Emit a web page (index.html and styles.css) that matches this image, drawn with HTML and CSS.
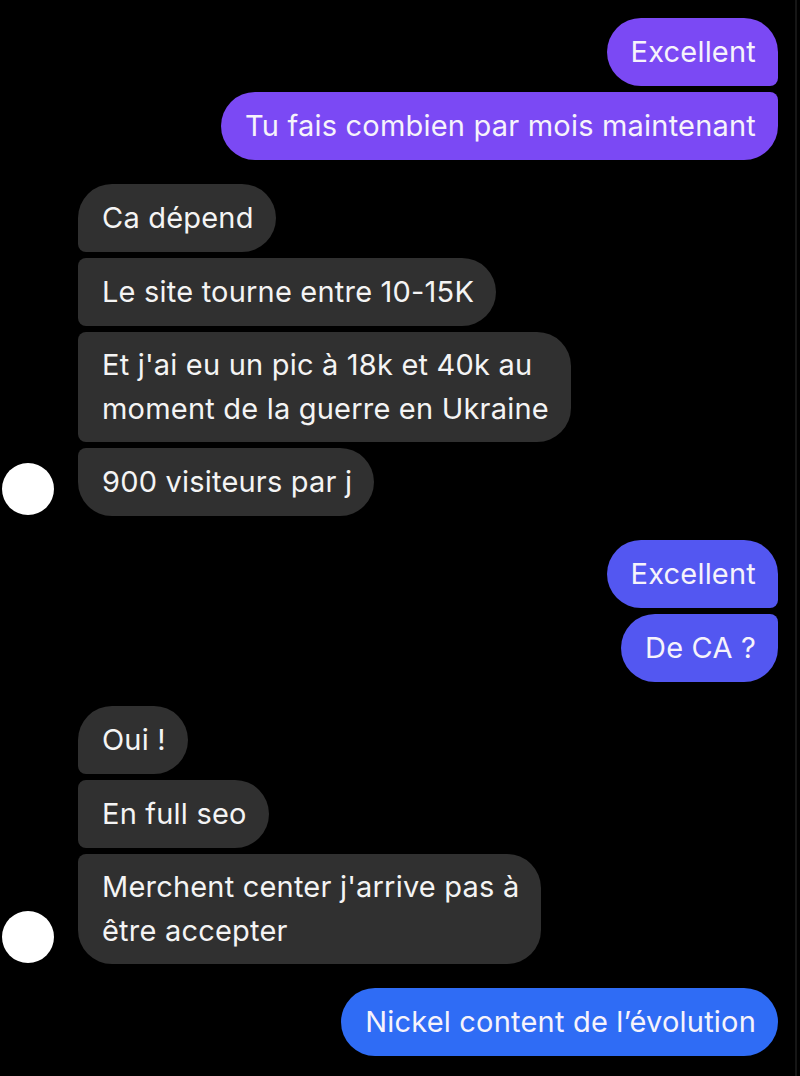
FILE: index.html
```html
<!DOCTYPE html>
<html lang="fr">
<head>
<meta charset="utf-8">
<title>Messages</title>
<link rel="stylesheet" href="styles.css">
</head>
<body>
<div class="screen">
  <div class="thread">
    <div class="group out purple">
      <div class="bubble">Excellent</div>
      <div class="bubble">Tu fais combien par mois maintenant</div>
    </div>

    <div class="group in">
      <div class="avatar"></div>
      <div class="stack">
        <div class="bubble">Ca dépend</div>
        <div class="bubble">Le site tourne entre 10-15K</div>
        <div class="bubble two">Et j'ai eu un pic à 18k et 40k au<br>moment de la guerre en Ukraine</div>
        <div class="bubble">900 visiteurs par j</div>
      </div>
    </div>

    <div class="group out violet">
      <div class="bubble">Excellent</div>
      <div class="bubble">De CA ?</div>
    </div>

    <div class="group in">
      <div class="avatar"></div>
      <div class="stack">
        <div class="bubble">Oui !</div>
        <div class="bubble">En full seo</div>
        <div class="bubble two">Merchent center j'arrive pas à<br>être accepter</div>
      </div>
    </div>

    <div class="group out blue">
      <div class="bubble">Nickel content de l’évolution</div>
    </div>
  </div>
</div>
</body>
</html>
```

FILE: styles.css
```css
html, body {
  margin: 0;
  padding: 0;
  background: #000;
}

.screen {
  width: 797px;
  height: 1076px;
  border-right: 2px solid #161616;
  box-sizing: border-box;
  overflow: hidden;
  background: #000;
  font-family: Inter, "Liberation Sans", Arial, sans-serif;
  font-size: 29px;
  letter-spacing: 0.2px;
  color: #f6f3fb;
}

.thread {
  display: flex;
  flex-direction: column;
  gap: 24px;
  padding: 18px 17px 0 0;
}

.group {
  display: flex;
  flex-direction: column;
  gap: 6px;
}

.bubble {
  line-height: 44px;
  padding: 12px 22px 12px 24px;
  border-radius: 34px;
  white-space: nowrap;
}

.bubble.two {
  padding-top: 11px;
  padding-bottom: 11px;
}

/* outgoing */
.group.out {
  align-items: flex-end;
}

.group.out .bubble:first-child:not(:last-child) {
  border-bottom-right-radius: 8px;
}

.group.out .bubble:last-child:not(:first-child) {
  border-top-right-radius: 8px;
}

.purple .bubble { background: #7b49f4; }
.violet .bubble { background: #5357f1; }
.blue .bubble { background: #2f6cf5; }

/* incoming */
.group.in {
  flex-direction: row;
  align-items: flex-end;
  gap: 24px;
  padding-left: 2px;
}

.avatar {
  width: 52px;
  height: 52px;
  border-radius: 50%;
  background: #fff;
  flex: none;
  margin-bottom: 1px;
}

.stack {
  display: flex;
  flex-direction: column;
  align-items: flex-start;
  gap: 6px;
}

.stack .bubble {
  background: #303030;
  color: #f4f4f4;
}

.stack .bubble:first-child {
  border-bottom-left-radius: 8px;
}

.stack .bubble:not(:first-child):not(:last-child) {
  border-top-left-radius: 8px;
  border-bottom-left-radius: 8px;
}

.stack .bubble:last-child {
  border-top-left-radius: 8px;
}
```
